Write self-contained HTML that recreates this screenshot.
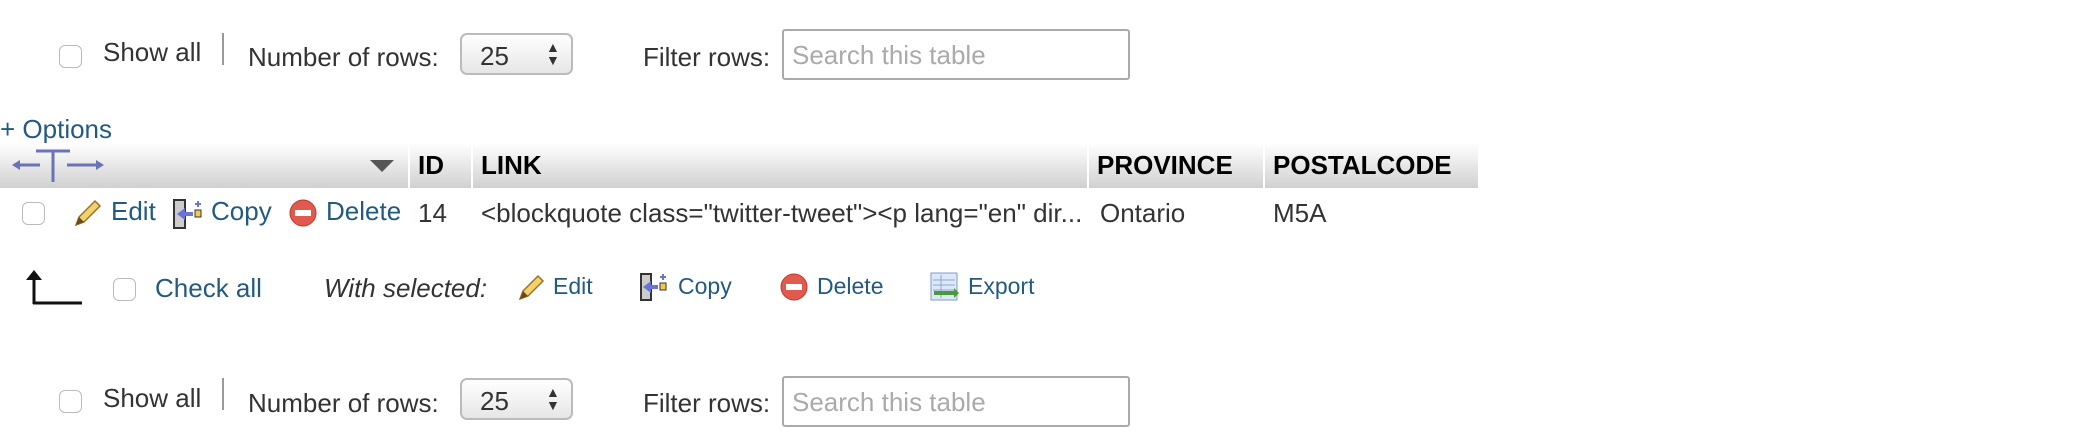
<!DOCTYPE html>
<html><head><meta charset="utf-8"><style>
body{margin:0;width:2085px;height:444px;background:#fff;font-family:"Liberation Sans",sans-serif;color:#333;position:relative;overflow:hidden}
.a{position:absolute;white-space:nowrap}
.cb{position:absolute;width:23px;height:23px;border:1.5px solid #bbb;border-radius:6px;background:#fff;box-sizing:border-box}
.lk{color:#235a81}
.f25{font-size:26px}
.sel{position:absolute;width:113px;height:42px;border:2px solid #bbb;border-radius:7px;background:linear-gradient(#fff,#e6e6e6);box-sizing:border-box;font-size:26px}
.inp{position:absolute;width:348px;height:51px;border:2px solid #aaa;border-radius:3px;box-sizing:border-box;font-size:26px;color:#aaa;padding:9px 8px}
.th{position:absolute;top:143px;height:45px;background:linear-gradient(#fff,#d0d0d0);font-weight:bold;font-size:26px;color:#000;line-height:45px;padding-left:8px;box-sizing:border-box}
.sm{font-size:23px}
</style></head><body>

<div class="cb" style="left:59px;top:45px"></div>
<div class="a f25" style="left:103px;top:37px">Show all</div>
<div class="a" style="left:222px;top:33px;width:2px;height:32px;background:#999"></div>
<div class="a f25" style="left:248px;top:42px">Number of rows:</div>
<div class="sel" style="left:460px;top:33px"><span class="a" style="left:18px;top:6px">25</span><span class="a" style="left:84px;top:6px;font-size:14px;line-height:13px">▲<br>▼</span></div>
<div class="a f25" style="left:643px;top:42px">Filter rows:</div>
<div class="inp" style="left:782px;top:29px">Search this table</div>

<div class="a lk" style="left:0;top:114px;font-size:26px">+ Options</div>

<div class="th" style="left:0;width:408px"></div>
<svg class="a" style="left:10px;top:148px" width="96" height="36"><g stroke="#6a73b8" fill="#6a73b8" stroke-width="3"><line x1="4" y1="17" x2="30" y2="17"/><polygon points="2,17 10,12 10,22" stroke="none"/><line x1="26" y1="3" x2="60" y2="3"/><line x1="43" y1="3" x2="43" y2="34"/><line x1="57" y1="17" x2="88" y2="17"/><polygon points="94,17 86,12 86,22" stroke="none"/></g></svg>
<svg class="a" style="left:370px;top:160px" width="24" height="14"><polygon points="0,0 24,0 12,12" fill="#555"/></svg>
<div class="th" style="left:410px;width:61px">ID</div>
<div class="th" style="left:473px;width:614px">LINK</div>
<div class="th" style="left:1089px;width:174px">PROVINCE</div>
<div class="th" style="left:1265px;width:213px">POSTALCODE</div>

<div class="cb" style="left:22px;top:202px"></div>
<svg class="a" style="left:73px;top:198px" width="30" height="30"><path d="M3 27 L6 19 L22 3 L27 8 L11 24 Z" fill="#f2d36b" stroke="#a0712a" stroke-width="1.5"/><path d="M3 27 L6 19 L11 24 Z" fill="#6b4a1a"/></svg>
<div class="a f25 lk" style="left:111px;top:196px">Edit</div>
<svg class="a" style="left:173px;top:199px" width="30" height="30"><rect x="1" y="1" width="11" height="28" fill="#ccc" stroke="#333" stroke-width="2"/><polygon points="4,15 12,9 12,13 20,13 20,17 12,17 12,21" fill="#6a73d8"/><rect x="22" y="11" width="6" height="7" fill="#f2c94c" stroke="#333"/><path d="M25 2v6M22 5h6" stroke="#6a73d8" stroke-width="2"/></svg>
<div class="a f25 lk" style="left:211px;top:196px">Copy</div>
<svg class="a" style="left:289px;top:199px" width="28" height="28"><circle cx="14" cy="14" r="13" fill="#e05a4e" stroke="#c0392b"/><rect x="6" y="11" width="16" height="6" fill="#fff"/></svg>
<div class="a f25 lk" style="left:326px;top:196px">Delete</div>
<div class="a f25" style="left:418px;top:198px">14</div>
<div class="a f25" style="left:481px;top:198px">&lt;blockquote class="twitter-tweet"&gt;&lt;p lang="en" dir...</div>
<div class="a f25" style="left:1100px;top:198px">Ontario</div>
<div class="a f25" style="left:1273px;top:198px">M5A</div>

<svg class="a" style="left:22px;top:270px" width="64" height="36"><path d="M12 34 V6" stroke="#111" stroke-width="3"/><polygon points="12,0 4,10 20,10" fill="#111"/><path d="M11 33 H60" stroke="#111" stroke-width="3"/></svg>
<div class="cb" style="left:113px;top:278px"></div>
<div class="a f25 lk" style="left:155px;top:273px">Check all</div>
<div class="a f25" style="left:324px;top:273px;font-style:italic">With selected:</div>
<svg class="a" style="left:517px;top:273px" width="28" height="28"><path d="M3 26 L6 18 L21 3 L26 8 L11 23 Z" fill="#f2d36b" stroke="#a0712a" stroke-width="1.5"/><path d="M3 26 L6 18 L11 23 Z" fill="#6b4a1a"/></svg>
<div class="a lk sm" style="left:553px;top:273px">Edit</div>
<svg class="a" style="left:640px;top:273px" width="28" height="28"><rect x="1" y="1" width="10" height="26" fill="#ccc" stroke="#333" stroke-width="2"/><polygon points="3,14 11,8 11,12 18,12 18,16 11,16 11,20" fill="#6a73d8"/><rect x="20" y="10" width="6" height="7" fill="#f2c94c" stroke="#333"/><path d="M23 1v6M20 4h6" stroke="#6a73d8" stroke-width="2"/></svg>
<div class="a lk sm" style="left:678px;top:273px">Copy</div>
<svg class="a" style="left:780px;top:273px" width="28" height="28"><circle cx="14" cy="14" r="13" fill="#e05a4e" stroke="#c0392b"/><rect x="6" y="11" width="16" height="6" fill="#fff"/></svg>
<div class="a lk sm" style="left:817px;top:273px">Delete</div>
<svg class="a" style="left:930px;top:272px" width="30" height="30"><rect x="1" y="1" width="26" height="27" fill="#dde7f5" stroke="#7b9ccc"/><path d="M3 8H25M3 13H25M3 18H25M11 3V26" stroke="#8aa8d8"/><rect x="4" y="19" width="20" height="4" fill="#4a9a3a"/><polygon points="24,16 29,21 24,26" fill="#4a9a3a"/></svg>
<div class="a lk sm" style="left:968px;top:273px">Export</div>

<div class="cb" style="left:59px;top:390px"></div>
<div class="a f25" style="left:103px;top:383px">Show all</div>
<div class="a" style="left:222px;top:378px;width:2px;height:32px;background:#999"></div>
<div class="a f25" style="left:248px;top:388px">Number of rows:</div>
<div class="sel" style="left:460px;top:378px"><span class="a" style="left:18px;top:6px">25</span><span class="a" style="left:84px;top:6px;font-size:14px;line-height:13px">▲<br>▼</span></div>
<div class="a f25" style="left:643px;top:388px">Filter rows:</div>
<div class="inp" style="left:782px;top:376px">Search this table</div>
</body></html>
